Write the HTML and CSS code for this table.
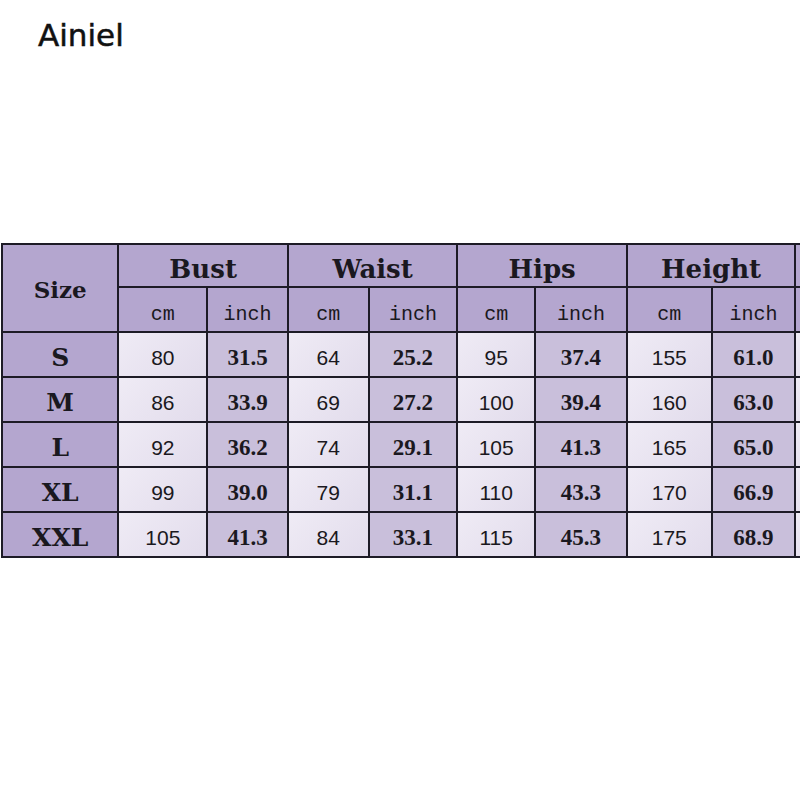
FILE: index.html
```html
<!DOCTYPE html>
<html>
<head>
<meta charset="utf-8">
<link rel="stylesheet" href="styles.css">
</head>
<body>
<div class="brand">Ainiel</div>
<div class="chart-wrap">
<table class="chart">
<colgroup>
<col class="c-size">
<col class="c-89"><col class="c-81">
<col class="c-81"><col class="c-89">
<col class="c-78"><col class="c-92">
<col class="c-85"><col class="c-84">
<col class="c-extra">
</colgroup>
<thead>
<tr class="h1">
<th rowspan="2" class="size-h">Size</th>
<th colspan="2">Bust</th>
<th colspan="2">Waist</th>
<th colspan="2">Hips</th>
<th colspan="2">Height</th>
<th class="extra"></th>
</tr>
<tr class="h2">
<th class="unit">cm</th><th class="unit">inch</th>
<th class="unit">cm</th><th class="unit">inch</th>
<th class="unit">cm</th><th class="unit">inch</th>
<th class="unit">cm</th><th class="unit">inch</th>
<th class="extra"></th>
</tr>
</thead>
<tbody>
<tr><th class="sz">S</th><td class="cm">80</td><td class="in">31.5</td><td class="cm">64</td><td class="in">25.2</td><td class="cm">95</td><td class="in">37.4</td><td class="cm">155</td><td class="in">61.0</td><td class="cm"></td></tr>
<tr><th class="sz">M</th><td class="cm">86</td><td class="in">33.9</td><td class="cm">69</td><td class="in">27.2</td><td class="cm">100</td><td class="in">39.4</td><td class="cm">160</td><td class="in">63.0</td><td class="cm"></td></tr>
<tr><th class="sz">L</th><td class="cm">92</td><td class="in">36.2</td><td class="cm">74</td><td class="in">29.1</td><td class="cm">105</td><td class="in">41.3</td><td class="cm">165</td><td class="in">65.0</td><td class="cm"></td></tr>
<tr><th class="sz">XL</th><td class="cm">99</td><td class="in">39.0</td><td class="cm">79</td><td class="in">31.1</td><td class="cm">110</td><td class="in">43.3</td><td class="cm">170</td><td class="in">66.9</td><td class="cm"></td></tr>
<tr><th class="sz">XXL</th><td class="cm">105</td><td class="in">41.3</td><td class="cm">84</td><td class="in">33.1</td><td class="cm">115</td><td class="in">45.3</td><td class="cm">175</td><td class="in">68.9</td><td class="cm"></td></tr>
</tbody>
</table>
</div>
</body>
</html>
```
FILE: styles.css
```css
html, body {
  margin: 0;
  padding: 0;
  background: #ffffff;
  overflow: hidden;
}
.brand {
  height: 243px;
  box-sizing: border-box;
  padding: 15px 0 0 38px;
  font-family: "DejaVu Sans", sans-serif;
  font-size: 31px;
  line-height: 40px;
  color: #111111;
  -webkit-text-stroke: 0.5px #111111;
}
.chart-wrap {
  width: 800px;
  overflow: hidden;
}
.chart {
  border-collapse: collapse;
  table-layout: fixed;
  width: 826px;
  margin-left: 1px;
  color: #1a1820;
}
.chart th, .chart td {
  border: 2px solid #1d1b26;
  padding: 0;
  text-align: center;
  vertical-align: middle;
}
.c-size { width: 114px; }
.c-89 { width: 87px; }
.c-81 { width: 79px; }
.c-78 { width: 76px; }
.c-92 { width: 90px; }
.c-85 { width: 83px; }
.c-84 { width: 82px; }
.c-extra { width: 30px; }
.chart .h1 th, .chart .h2 th, .chart .sz {
  background: #b4a6cf;
}
.chart .h1 th {
  height: 43px;
  font-family: "DejaVu Serif", serif;
  font-weight: bold;
  font-size: 26px;
  padding-top: 6px;
  box-sizing: border-box;
}
.chart .h1 th.size-h {
  font-size: 23px;
  padding-top: 2px;
}
.chart .h2 th {
  height: 33px;
}
.chart .unit {
  font-family: "Liberation Mono", monospace;
  font-weight: normal;
  font-size: 20px;
  padding-top: 10px;
}
.chart tbody tr {
  height: 45px;
}
.chart .sz {
  font-family: "DejaVu Serif", serif;
  font-weight: bold;
  font-size: 25px;
  padding-top: 6px;
}
.chart .cm {
  background: linear-gradient(135deg, #efebf5, #e2dcec);
  font-family: "Liberation Sans", sans-serif;
  font-size: 21px;
  padding-top: 7px;
}
.chart .in {
  background: #c9bfdb;
  font-family: "Liberation Serif", serif;
  font-weight: bold;
  font-size: 23px;
  padding-top: 7px;
}
```
